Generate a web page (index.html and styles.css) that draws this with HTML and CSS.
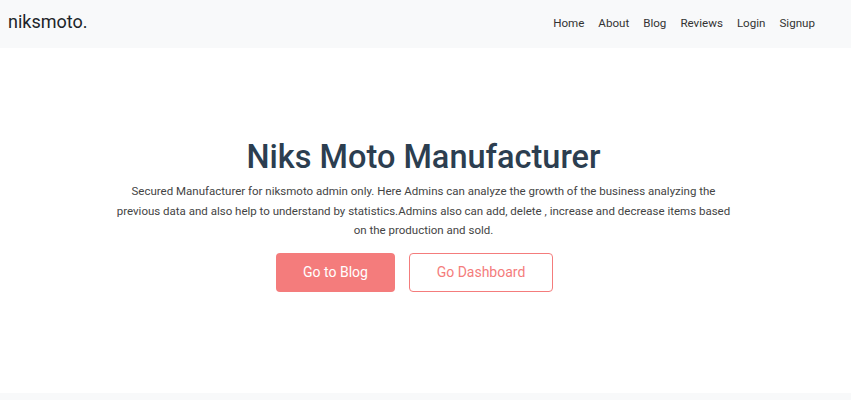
FILE: index.html
```html
<!DOCTYPE html>
<html>
<head>
<meta charset="utf-8">
<link rel="stylesheet" href="styles.css">
</head>
<body>
<nav class="navbar">
  <a class="brand" href="#">niksmoto.</a>
  <ul class="nav">
    <li><a href="#">Home</a></li>
    <li><a href="#">About</a></li>
    <li><a href="#">Blog</a></li>
    <li><a href="#">Reviews</a></li>
    <li><a href="#">Login</a></li>
    <li><a href="#">Signup</a></li>
  </ul>
</nav>
<main class="hero">
  <h1 class="title">Niks Moto Manufacturer</h1>
  <p class="lead">Secured Manufacturer for niksmoto admin only. Here Admins can analyze the growth of the business analyzing the previous data and also help to understand by statistics.Admins also can add, delete , increase and decrease items based on the production and sold.</p>
  <div class="actions">
    <a class="btn btn-fill" href="#">Go to Blog</a>
    <a class="btn btn-outline" href="#">Go Dashboard</a>
  </div>
</main>
<footer class="footer"></footer>
</body>
</html>
```

FILE: styles.css
```css
* { box-sizing: border-box; }
html, body { margin: 0; padding: 0; }
body {
  font-family: Roboto, "Liberation Sans", sans-serif;
  background: #fff;
  color: #333;
}
a { text-decoration: none; }
.navbar {
  height: 48px;
  background: #f8f9fa;
  display: flex;
  align-items: center;
  justify-content: space-between;
  padding: 0 36px 6px 8px;
}
.brand {
  font-size: 18px;
  color: #212529;
}
.nav {
  list-style: none;
  margin: 0;
  padding: 0;
  display: flex;
  gap: 14px;
}
.nav a {
  font-size: 11.6px;
  color: #333;
}
.hero {
  height: 345px;
  display: flex;
  flex-direction: column;
  align-items: center;
  padding-top: 89px;
}
.title {
  margin: 0 0 0 -4px;
  font-size: 32.5px;
  font-weight: 500;
  color: #2c3e50;
  line-height: 40px;
}
.lead {
  margin: 5px 0 0 -4px;
  width: 622px;
  text-align: center;
  font-size: 11.5px;
  line-height: 19.5px;
  color: #444;
}
.actions {
  margin-top: 12px;
  margin-right: 22px;
  display: flex;
  gap: 14px;
}
.btn {
  height: 39px;
  display: flex;
  align-items: center;
  justify-content: center;
  border-radius: 4px;
  font-size: 14px;
}
.btn-fill {
  width: 119px;
  background: #f47c7c;
  color: #fff;
}
.btn-outline {
  width: 144px;
  border: 1px solid #f47c7c;
  color: #f47c7c;
  background: #fff;
}
.footer {
  height: 7px;
  background: #f8f9fa;
}
```
